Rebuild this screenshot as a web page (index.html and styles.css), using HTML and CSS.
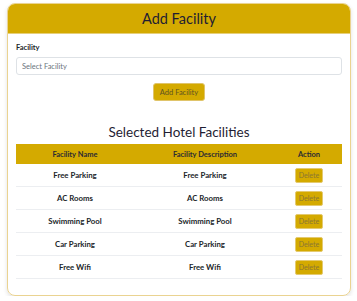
FILE: index.html
```html
<!DOCTYPE html>
<html lang="en">
<head>
    <meta charset="UTF-8">
    <meta name="viewport" content="width=device-width, initial-scale=1.0">
    <title>Add Facility</title>
    <link rel="stylesheet" href="styles.css">
</head>
<body>
    <div class="card">
        <div class="card-header">Add Facility</div>
        <div class="card-body">
            <label for="facility">Facility</label>
            <input type="text" id="facility" placeholder="Select Facility">
            <button class="add-btn">Add Facility</button>

            <h2>Selected Hotel Facilities</h2>
            <table>
                <thead>
                    <tr>
                        <th class="col-name">Facility Name</th>
                        <th class="col-desc">Facility Description</th>
                        <th class="col-action">Action</th>
                    </tr>
                </thead>
                <tbody>
                    <tr><td>Free Parking</td><td>Free Parking</td><td><button class="delete-btn">Delete</button></td></tr>
                    <tr><td>AC Rooms</td><td>AC Rooms</td><td><button class="delete-btn">Delete</button></td></tr>
                    <tr><td>Swimming Pool</td><td>Swimming Pool</td><td><button class="delete-btn">Delete</button></td></tr>
                    <tr><td>Car Parking</td><td>Car Parking</td><td><button class="delete-btn">Delete</button></td></tr>
                    <tr><td>Free Wifi</td><td>Free Wifi</td><td><button class="delete-btn">Delete</button></td></tr>
                </tbody>
            </table>
        </div>
    </div>
</body>
</html>
```

FILE: styles.css
```css
body {
    font-family: 'Lato', sans-serif;
    color: #212529;
    background-color: #fff;
    margin: 0;
    padding: 3px 6px 0 7px;
}
.card {
    width: 342px;
    height: 291px;
    border: 1px solid #ead391;
    border-radius: 8px;
    overflow: hidden;
    box-shadow: 0 2px 4px rgba(0, 0, 0, 0.12);
}
.card-header {
    height: 29px;
    line-height: 29px;
    background-color: #d4aa00;
    border-bottom: 1px solid #e6cf7a;
    text-align: center;
    font-size: 14.5px;
    color: #1f1d33;
}
.card-body {
    padding: 9px 8px 0 8px;
}
label {
    display: block;
    font-size: 7.5px;
    font-weight: bold;
    line-height: 10px;
    margin-bottom: 4px;
}
input[type="text"] {
    display: block;
    box-sizing: border-box;
    width: 100%;
    height: 18px;
    padding: 0 5px;
    border: 1px solid #dee2e6;
    border-radius: 3px;
    font-family: 'Lato', sans-serif;
    font-size: 7.5px;
    color: #495057;
}
input::placeholder {
    color: #6c757d;
}
.add-btn {
    display: block;
    margin: 8px auto 0;
    width: 52px;
    height: 18px;
    padding: 0;
    background-color: #d4aa00;
    border: 1px solid #e0c46a;
    border-radius: 3px;
    font-family: 'Lato', sans-serif;
    font-size: 7.5px;
    color: #5f5320;
}
h2 {
    margin: 23px 0 3px;
    text-align: center;
    font-size: 13.5px;
    font-weight: normal;
    line-height: 17px;
    color: #1f1d33;
}
table {
    width: 100%;
    border-collapse: collapse;
    table-layout: fixed;
}
th {
    height: 20px;
    padding: 0;
    background-color: #d4aa00;
    font-size: 7.5px;
    color: #2b2a33;
}
.col-name { width: 118px; }
.col-desc { width: 142px; }
td {
    height: 22px;
    padding: 0;
    text-align: center;
    font-size: 7.8px;
    font-weight: bold;
    border-bottom: 1px solid #eceef1;
}
.delete-btn {
    width: 28px;
    height: 15px;
    padding: 0;
    background-color: #d4aa00;
    border: 1px solid #e4ca70;
    border-radius: 2px;
    font-family: 'Lato', sans-serif;
    font-size: 7px;
    color: #8a7634;
}
```
